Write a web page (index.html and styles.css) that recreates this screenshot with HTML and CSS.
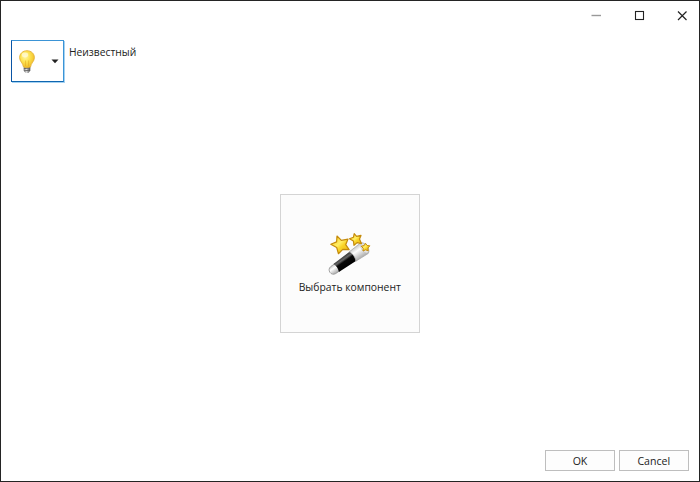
FILE: index.html
```html
<!DOCTYPE html>
<html lang="ru">
<head>
<meta charset="utf-8">
<title>Неизвестный</title>
<link rel="stylesheet" href="styles.css">
</head>
<body>
<div class="window">
  <div class="titlebar">
    <svg class="caption" viewBox="0 0 43 30"><path d="M21.500 14.500h9.500" stroke="#999" stroke-width="1.400"/></svg>
    <svg class="caption" viewBox="0 0 43 30"><rect x="22.500" y="10.500" width="8" height="8" fill="none" stroke="#222" stroke-width="1.1"/></svg>
    <svg class="caption" viewBox="0 0 43 30"><path d="M22 10.500l8.500 8.500M30.500 10.500l-8.500 8.500" stroke="#222" stroke-width="1.2"/></svg>
  </div>
  <header class="header">
    <button class="picker" aria-label="Icon">
      <svg class="bulb" viewBox="0 0 16 24">
        <defs>
          <radialGradient id="glass" cx=".38" cy=".35" r=".7">
            <stop offset="0" stop-color="#fff8a8"/><stop offset=".45" stop-color="#fde352"/><stop offset="1" stop-color="#efb923"/>
          </radialGradient>
          <linearGradient id="cap"><stop offset="0" stop-color="#777"/><stop offset=".4" stop-color="#e2e2e2"/><stop offset="1" stop-color="#4c4c4c"/></linearGradient>
        </defs>
        <path d="M4.700 16.500h6.600v4L9.500 23h-3l-1.800-2.500z" fill="url(#cap)"/>
        <path d="M4.800 18.700l6.400-.8M5 20.900l6-.8" stroke="#555" stroke-width=".8"/>
        <path d="M8 .7C3.700.7.600 3.700.600 7.600c0 3.900 3.300 5.200 3.800 9.200.9.900 6.300.9 7.200 0 .5-4 3.800-5.300 3.800-9.200C15.400 3.700 12.300.7 8 .7z" fill="url(#glass)" stroke="#e2ac2b" stroke-width=".8"/>
        <path d="M6.500 16V10.500M9.500 16V10.500" stroke="#e0a51e" stroke-width=".5"/>
        <ellipse cx="6" cy="5" rx="3.200" ry="2.400" fill="#fffbe0" opacity=".7"/>
      </svg>
      <svg class="arrow" viewBox="0 0 8 5"><path d="M.5.500h7L4 4.300z" fill="#222"/></svg>
    </button>
    <span class="name">Неизвестный</span>
  </header>
  <main class="content">
    <button class="choose">
      <svg class="wand" viewBox="0 0 44 44">
        <defs>
          <linearGradient id="rod" x1="0" y1="0" x2="0" y2="1"><stop offset="0" stop-color="#333"/><stop offset=".25" stop-color="#666"/><stop offset=".45" stop-color="#080808"/><stop offset="1" stop-color="#000"/></linearGradient>
          <linearGradient id="tip" x1="0" y1="0" x2="0" y2="1"><stop offset="0" stop-color="#c8c8c8"/><stop offset=".35" stop-color="#fff"/><stop offset="1" stop-color="#aaa"/></linearGradient>
          <linearGradient id="gold" x1="0" y1="0" x2="1" y2="1"><stop offset="0" stop-color="#f8ca1d"/><stop offset=".45" stop-color="#ffee65"/><stop offset=".6" stop-color="#f9d427"/><stop offset="1" stop-color="#e8b010"/></linearGradient>
        </defs>
        <g transform="translate(5.300 37) rotate(-35)">
          <path d="M0-4.300C-5.500-4-5.500 4 0 4.300h5v-8.600z" fill="url(#tip)" stroke="#999" stroke-width=".8"/>
          <path d="M3.500-4.800L25-5.700v11.400L3.500 4.800C5 1.500 5 -1.500 3.500-4.800z" fill="url(#rod)"/>
          <path d="M23.500-5.700L38-6.500c4.500 1.400 4.500 11.600 0 13L23.500 5.700c1.900-3 1.900-8.400 0-11.400z" fill="url(#tip)" stroke="#aaa" stroke-width=".7"/>
          <ellipse cx="38" cy="0" rx="2.900" ry="5.500" fill="#e5e5e5" stroke="#bbb" stroke-width=".5"/>
        </g>
        <g fill="url(#gold)" stroke="#c58b0b" stroke-width="1.200" stroke-linejoin="round">
          <path d="M9 3l4.400 4.400 6.600-1.300-2.300 5.600 3.400 5-6.300-.3-4.400 4.300-1.700-6.200-5.900-3.300 5.800-2.300z"/>
          <path d="M26.200.7l2.400 2.600 4.400-.9-1.500 3.700 1.900 4.500-4.300-1-3.100 2.700-.6-4.400-3.900-2.200 4-1.500z"/>
          <path d="M37.500 10.300l1.600 2.200 2.700.3-1.900 2.200.3 2.800-2.700-1-2.500 1.200.2-2.800-2-2 2.900-.6z" stroke-width="1"/>
        </g>
      </svg>
      <span class="choose-label">Выбрать компонент</span>
    </button>
  </main>
  <footer class="footer">
    <button class="action"><span class="action-label">OK</span></button>
    <button class="action"><span class="action-label">Cancel</span></button>
  </footer>
</div>
</body>
</html>
```
FILE: styles.css
```css
* { box-sizing: border-box; }
body { margin: 0; }
button { margin: 0; padding: 0; border-radius: 0; font: inherit; color: inherit; }
.window {
  width: 700px;
  height: 482px;
  border: 1px solid #242424;
  background: #fff;
  color: #222;
  font-family: "Open Sans", "Noto Sans", sans-serif;
  font-size: 11.5px;
  line-height: 16px;
  display: flex;
  flex-direction: column;
}
.titlebar { height: 39px; display: flex; justify-content: flex-end; }
.caption { width: 43px; height: 30px; fill: none; }
.header { height: 43px; padding-left: 10px; display: flex; gap: 5px; }
.picker {
  width: 53px;
  height: 42px;
  border: 1px solid;
  border-color: #3b94d6 #3b94d6 #0f66b0 #0a55a5;
  box-shadow: 1px 1px 0 0 #a5d2f2;
  background: #fff;
  display: flex;
  align-items: center;
  justify-content: space-between;
  padding: 1px 4px 0 7px;
}
.bulb { width: 16px; height: 24px; }
.arrow { width: 8px; height: 5px; }
.name { padding-top: 4px; white-space: nowrap; transform: scaleX(.893); transform-origin: left; }
.content { flex: 1; display: flex; justify-content: center; padding-top: 111px; }
.choose {
  width: 140px;
  height: 139px;
  border: 1px solid #d4d4d4;
  background: #fcfcfc;
  display: flex;
  flex-direction: column;
  align-items: center;
  padding-top: 38px;
}
.wand { width: 44px; height: 44px; }
.choose-label { margin-top: 2px; white-space: nowrap; transform: scaleX(.9); }
.footer { display: flex; justify-content: flex-end; gap: 4px; padding: 0 10px 10px 0; }
.action { width: 70px; height: 21px; border: 1px solid #bebebe; background: #fdfdfd; line-height: 19px; }
.action-label { display: inline-block; transform: scaleX(.92); }
```
